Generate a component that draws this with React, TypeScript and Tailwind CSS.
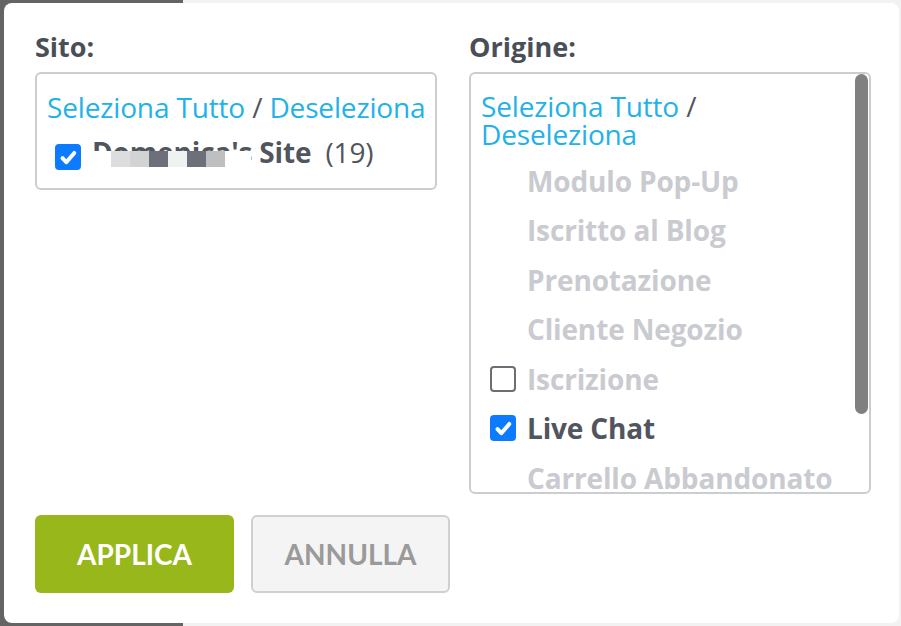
const font = { fontFamily: '"Open Sans", "Liberation Sans", sans-serif' };
const btnFont = { fontFamily: 'Lato, "Open Sans", sans-serif' };

const Check = ({ checked }: { checked: boolean }) =>
  checked ? (
    <span className="flex h-[26px] w-[26px] shrink-0 items-center justify-center rounded-[4px] bg-[#0d7bff]">
      <svg width="21" height="21" viewBox="0 0 20 20" fill="none">
        <path d="M4.3 10.6l3.6 3.9 7.6-8.8" stroke="#fff" strokeWidth="3.8" strokeLinecap="round" strokeLinejoin="round" />
      </svg>
    </span>
  ) : (
    <span className="h-[26px] w-[26px] shrink-0 rounded-[4px] border-2 border-[#6b6e73] bg-white" />
  );

const origins = [
  { label: "Modulo Pop-Up", box: false, checked: false, active: false },
  { label: "Iscritto al Blog", box: false, checked: false, active: false },
  { label: "Prenotazione", box: false, checked: false, active: false },
  { label: "Cliente Negozio", box: false, checked: false, active: false },
  { label: "Iscrizione", box: true, checked: false, active: false },
  { label: "Live Chat", box: true, checked: true, active: true },
  { label: "Carrello Abbandonato", box: false, checked: false, active: false },
];

const blocks = ["#dcdddf", "#d2d3d5", "#6d7079", "#f0f1f1", "#6d7079", "#bdbfc1"];

const SelectAll = () => (
  <>
    <span className="text-[#22b1e8]">Seleziona Tutto</span> <span className="text-[#50555e]">/</span>{" "}
    <span className="text-[#22b1e8]">Deseleziona</span>
  </>
);

export default function App() {
  return (
    <div className="relative h-[626px] w-[901px] overflow-hidden" style={font}>
      <div className="flex h-full">
        <div className="w-[183px] bg-[#646464]" />
        <div className="flex-1 bg-[#f2f2f2]" />
      </div>

      <div className="absolute left-[4px] top-[3px] flex h-[620px] w-[895px] flex-col rounded-[8px] bg-white pl-[31px] pr-[28px]">
        <div className="flex gap-[32px]">
          {/* Sito */}
          <div className="w-[402px]">
            <h3 className="mt-[30px] h-[39px] text-[27px] font-bold leading-[28px] text-[#4a4f57]">Sito:</h3>
            <div className="h-[118px] rounded-[6px] border-2 border-[#cbcdd1] pl-[10px] pt-[19px]">
              <div className="whitespace-nowrap text-[28px] leading-[28px] tracking-[-0.15px]">
                <SelectAll />
              </div>
              <div className="mt-[17px] flex items-start pl-[8px] text-[28px] leading-[28px] tracking-[-0.15px] text-[#50555e]">
                <span className="mt-[6px]">
                  <Check checked />
                </span>
                <span className="relative ml-[11px] font-bold">
                  Domenica's Site
                  <span className="absolute left-0 top-[13px] flex h-[19px] w-[159px] bg-white pl-[19px]">
                    {blocks.map((c, i) => (
                      <span key={i} className="h-[16px] w-[19px]" style={{ background: c }} />
                    ))}
                  </span>
                </span>
                <span className="ml-[14px]">(19)</span>
              </div>
            </div>
          </div>

          {/* Origine */}
          <div className="w-[402px]">
            <h3 className="mt-[30px] h-[39px] text-[27px] font-bold leading-[28px] text-[#4a4f57]">Origine:</h3>
            <div className="flex h-[422px] overflow-hidden rounded-[6px] border-2 border-[#cbcdd1]">
              <div className="flex-1 pl-[10px] pt-[18px]">
                <div className="text-[28px] leading-[28px] tracking-[-0.15px]">
                  <SelectAll />
                </div>
                <ul className="mt-[8px] text-[28px] font-bold leading-[28px] tracking-[-0.15px]">
                  {origins.map((o) => (
                    <li key={o.label} className="flex h-[49.5px] items-center gap-[11px] pl-[9px]">
                      {o.box ? <Check checked={o.checked} /> : <span className="w-[26px] shrink-0" />}
                      <span className={"whitespace-nowrap " + (o.active ? "text-[#50555e]" : "text-[#c9cbd0]")}>
                        {o.label}
                      </span>
                    </li>
                  ))}
                </ul>
              </div>
              <div className="w-[14px] pr-[1px]">
                <div className="h-[340px] rounded-full bg-[#808080]" />
              </div>
            </div>
          </div>
        </div>

        <div className="mb-[30px] mt-auto flex gap-[17px]">
          <button
            className="h-[78px] w-[199px] rounded-[6px] bg-[#97b71b] text-[28px] font-bold text-white"
            style={btnFont}
          >
            APPLICA
          </button>
          <button
            className="h-[78px] w-[199px] rounded-[6px] border-2 border-[#d0d0d0] bg-[#f4f4f4] text-[28px] font-bold text-[#9a9a9a]"
            style={btnFont}
          >
            ANNULLA
          </button>
        </div>
      </div>
    </div>
  );
}
